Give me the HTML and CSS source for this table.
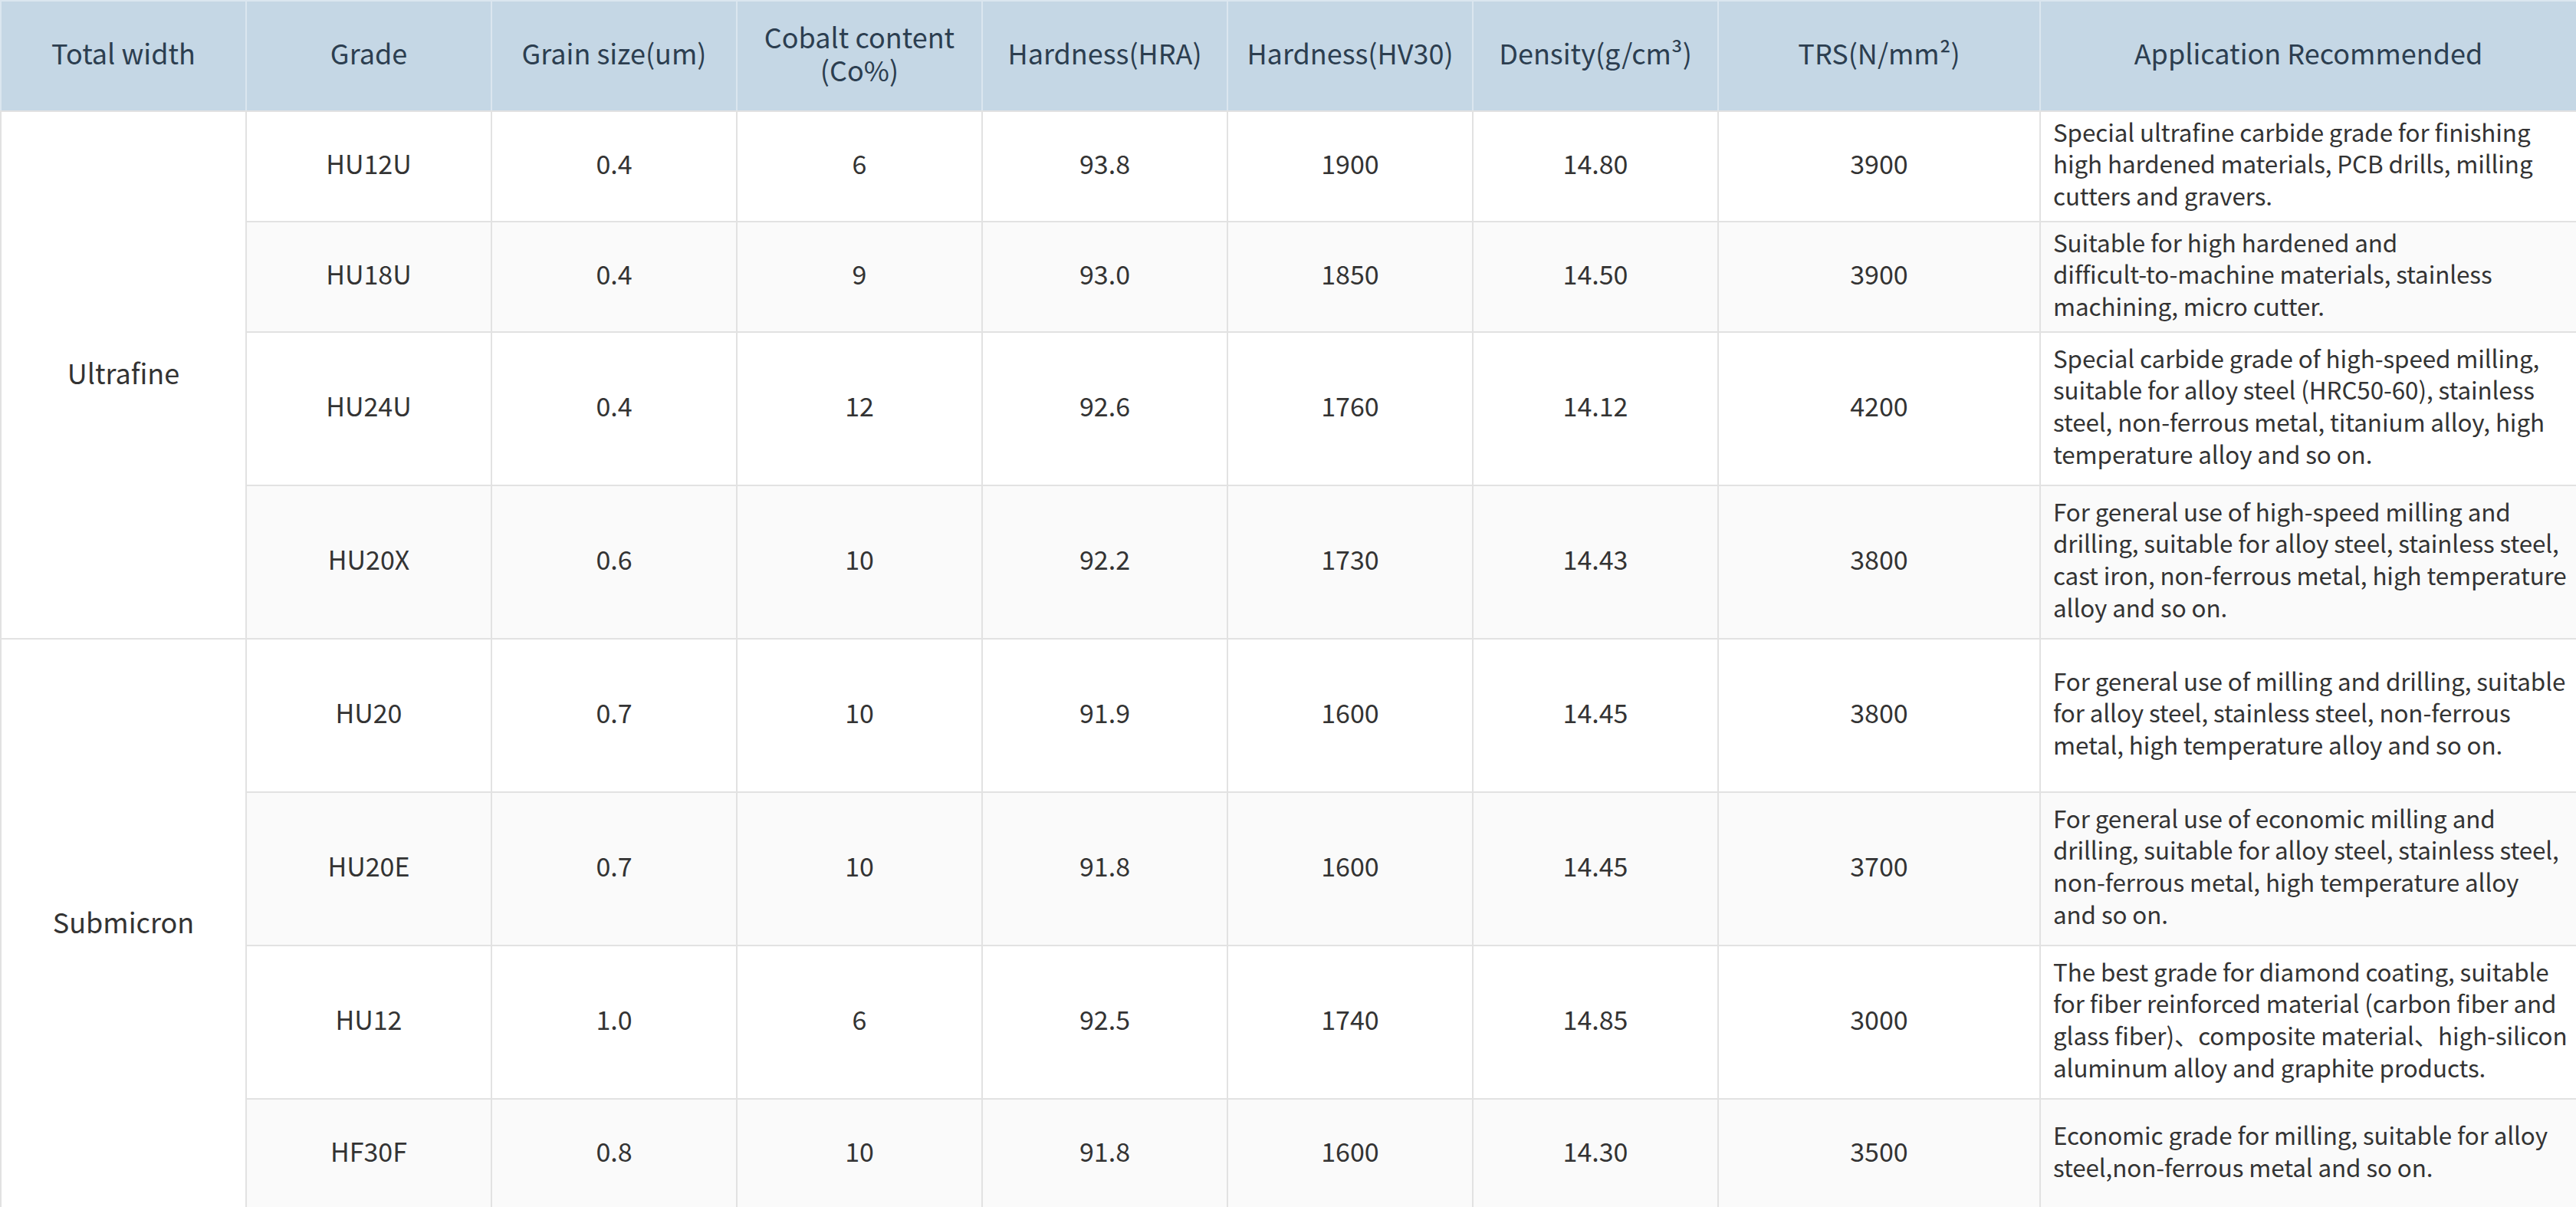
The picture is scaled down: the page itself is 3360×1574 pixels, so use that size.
FILE: index.html
```html
<!DOCTYPE html>
<html lang="en">
<head>
<meta charset="utf-8">
<title>Carbide grades</title>
<link rel="stylesheet" href="styles.css">
</head>
<body>
<table class="grades">
  <colgroup>
    <col class="c-std"><col class="c-std"><col class="c-std"><col class="c-std"><col class="c-std"><col class="c-std"><col class="c-std"><col class="c-trs"><col class="c-app">
  </colgroup>
  <thead>
    <tr class="head">
      <th>Total width</th>
      <th>Grade</th>
      <th>Grain size(um)</th>
      <th>Cobalt content<br>(Co%)</th>
      <th>Hardness(HRA)</th>
      <th>Hardness(HV30)</th>
      <th>Density(g/cm³)</th>
      <th>TRS(N/mm²)</th>
      <th>Application Recommended</th>
    </tr>
  </thead>
  <tbody>
    <tr class="r-s">
      <td class="group" rowspan="4">Ultrafine</td>
      <td>HU12U</td><td>0.4</td><td>6</td><td>93.8</td><td>1900</td><td>14.80</td><td>3900</td>
      <td class="app">Special ultrafine carbide grade for finishing high hardened materials, PCB drills, milling cutters and gravers.</td>
    </tr>
    <tr class="r-s">
      <td>HU18U</td><td>0.4</td><td>9</td><td>93.0</td><td>1850</td><td>14.50</td><td>3900</td>
      <td class="app">Suitable for high hardened and <span class="nb">difficult-to-machine</span> materials, stainless machining, micro cutter.</td>
    </tr>
    <tr class="r-l">
      <td>HU24U</td><td>0.4</td><td>12</td><td>92.6</td><td>1760</td><td>14.12</td><td>4200</td>
      <td class="app">Special carbide grade of <span class="nb">high-speed</span> milling, suitable for alloy steel <span class="nb">(HRC50-60),</span> stainless steel, <span class="nb">non-ferrous</span> metal, titanium alloy, high temperature alloy and so on.</td>
    </tr>
    <tr class="r-l">
      <td>HU20X</td><td>0.6</td><td>10</td><td>92.2</td><td>1730</td><td>14.43</td><td>3800</td>
      <td class="app">For general use of <span class="nb">high-speed</span> milling and drilling, suitable for alloy steel, stainless steel, cast iron, <span class="nb">non-ferrous</span> metal, high temperature alloy and so on.</td>
    </tr>
    <tr class="r-l">
      <td class="group" rowspan="4">Submicron</td>
      <td>HU20</td><td>0.7</td><td>10</td><td>91.9</td><td>1600</td><td>14.45</td><td>3800</td>
      <td class="app">For general use of milling and drilling, suitable for alloy steel, stainless steel, <span class="nb">non-ferrous</span> metal, high temperature alloy and so on.</td>
    </tr>
    <tr class="r-l">
      <td>HU20E</td><td>0.7</td><td>10</td><td>91.8</td><td>1600</td><td>14.45</td><td>3700</td>
      <td class="app">For general use of economic milling and drilling, suitable for alloy steel, stainless steel, <span class="nb">non-ferrous</span> metal, high temperature alloy <span class="nb">and so on.</span></td>
    </tr>
    <tr class="r-l">
      <td>HU12</td><td>1.0</td><td>6</td><td>92.5</td><td>1740</td><td>14.85</td><td>3000</td>
      <td class="app">The best grade for diamond coating, suitable for fiber reinforced material (carbon fiber and glass fiber)、composite material、<span class="nb">high-silicon</span> aluminum alloy and graphite products.</td>
    </tr>
    <tr class="r-s">
      <td>HF30F</td><td>0.8</td><td>10</td><td>91.8</td><td>1600</td><td>14.30</td><td>3500</td>
      <td class="app">Economic grade for milling, suitable for alloy <span class="nb">steel,non-ferrous</span> metal and so on.</td>
    </tr>
  </tbody>
</table>
</body>
</html>
```
FILE: styles.css
```css
html, body {
  margin: 0;
  padding: 0;
  background: #ffffff;
}

body {
  font-family: "Noto Sans CJK SC", "Noto Sans", sans-serif;
  color: #333333;
}

.grades {
  width: 3360px;
  table-layout: fixed;
  border-collapse: collapse;
  border: 2px solid #e2e2e2;
}

.c-std { width: 320px; }
.c-trs { width: 420px; }
.c-app { width: 700px; }

.head {
  height: 144px;
  background: #c5d7e5;
}

.head th {
  font-weight: 400;
  font-size: 36px;
  line-height: 1.2;
  color: #2c3e50;
  text-align: center;
  vertical-align: middle;
  padding: 0 8px 8px;
  border: 2px solid #dbe6ef;
  border-bottom: 2px solid #e2e2e2;
}

tbody td {
  font-size: 34px;
  line-height: 1.3;
  text-align: center;
  vertical-align: middle;
  border: 2px solid #e2e2e2;
  padding: 0 0 8px;
}

tbody tr:nth-child(even) {
  background: #fafafa;
}

.r-s { height: 144px; }
.r-l { height: 200px; }

tbody td.group {
  font-size: 36px;
  background: #ffffff;
}

tbody td.app {
  text-align: left;
  font-size: 31.4px;
  line-height: 41.6px;
  letter-spacing: -0.1px;
  padding: 0 0 8px 16px;
}

.nb {
  white-space: nowrap;
}
```
